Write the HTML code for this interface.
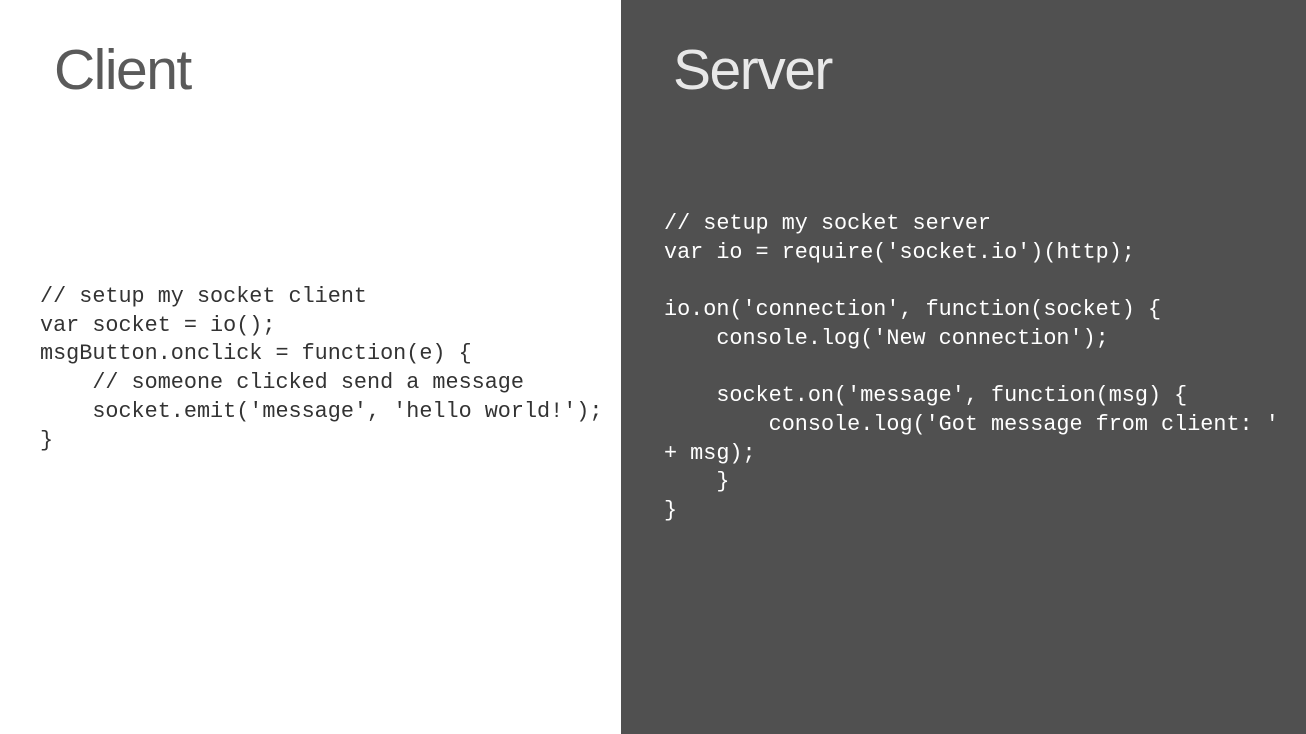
<!DOCTYPE html>
<html><head><style>
body{margin:0;width:1306px;height:734px;position:relative;overflow:hidden;background:#fff;font-family:"Liberation Sans",sans-serif}
.right{position:absolute;left:621px;top:0;width:685px;height:734px;background:#505050}
h1{position:absolute;margin:0;font-weight:normal;font-size:57px;letter-spacing:-1.5px;line-height:1;top:42px}
pre{position:absolute;margin:0;font-family:"Liberation Mono",monospace;font-size:21.8px;line-height:28.7px}
</style></head><body>
<div class="right"></div>
<h1 style="left:54px;color:#5a5a5a">Client</h1>
<h1 style="left:673px;color:#e8e8e8">Server</h1>
<pre style="left:40px;top:283px;color:#333">// setup my socket client
var socket = io();
msgButton.onclick = function(e) {
    // someone clicked send a message
    socket.emit('message', 'hello world!');
}</pre>
<pre style="left:664px;top:210px;color:#fff">// setup my socket server
var io = require('socket.io')(http);

io.on('connection', function(socket) {
    console.log('New connection');

    socket.on('message', function(msg) {
        console.log('Got message from client: '
+ msg);
    }
}</pre>
</body></html>
